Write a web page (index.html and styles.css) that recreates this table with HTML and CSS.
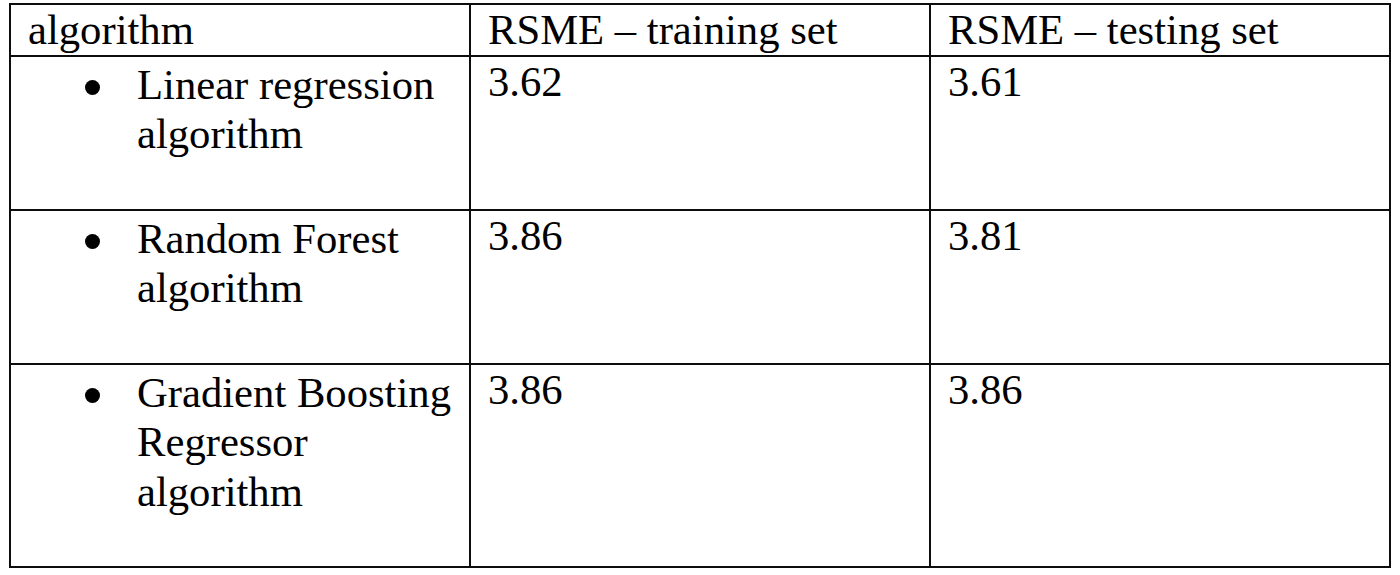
FILE: index.html
```html
<!DOCTYPE html>
<html lang="en">
<head>
    <meta charset="UTF-8">
    <meta name="viewport" content="width=device-width, initial-scale=1.0">
    <title>RSME by algorithm</title>
    <link rel="stylesheet" href="styles.css">
</head>
<body>
<table class="results">
    <colgroup>
        <col class="col">
        <col class="col">
        <col class="col">
    </colgroup>
    <thead>
        <tr>
            <th>algorithm</th>
            <th>RSME – training set</th>
            <th>RSME – testing set</th>
        </tr>
    </thead>
    <tbody>
        <tr>
            <td class="algo">
                <ul class="algo-list"><li>Linear regression<br>algorithm</li></ul>
            </td>
            <td>3.62</td>
            <td>3.61</td>
        </tr>
        <tr>
            <td class="algo">
                <ul class="algo-list"><li>Random Forest<br>algorithm</li></ul>
            </td>
            <td>3.86</td>
            <td>3.81</td>
        </tr>
        <tr>
            <td class="algo">
                <ul class="algo-list"><li>Gradient Boosting<br>Regressor<br>algorithm</li></ul>
            </td>
            <td>3.86</td>
            <td>3.86</td>
        </tr>
    </tbody>
</table>
</body>
</html>
```

FILE: styles.css
```css
body {
    margin: 0;
    padding: 0;
    background-color: #ffffff;
    color: #000000;
    font-family: "Liberation Serif", "Times New Roman", serif;
}
.results {
    border-collapse: collapse;
    table-layout: fixed;
    width: 1382px;
    margin: 3px 0 0 9px;
    font-size: 32pt;
    line-height: 49.5px;
}
.col {
    width: 33.333%;
}
.results th,
.results td {
    border: 2px solid #0d0d0d;
    padding: 0 17px;
    vertical-align: top;
    text-align: left;
    font-weight: normal;
}
.results td.algo {
    padding-bottom: 50px;
}
.algo-list {
    list-style-type: none;
    margin: 3px 0 0 0;
    padding: 0;
}
.algo-list li {
    display: flex;
    align-items: flex-start;
}
.algo-list li::before {
    content: "";
    flex: none;
    width: 15px;
    height: 15px;
    margin: 20px 37px 0 57px;
    border-radius: 50%;
    background-color: #000000;
}
```
